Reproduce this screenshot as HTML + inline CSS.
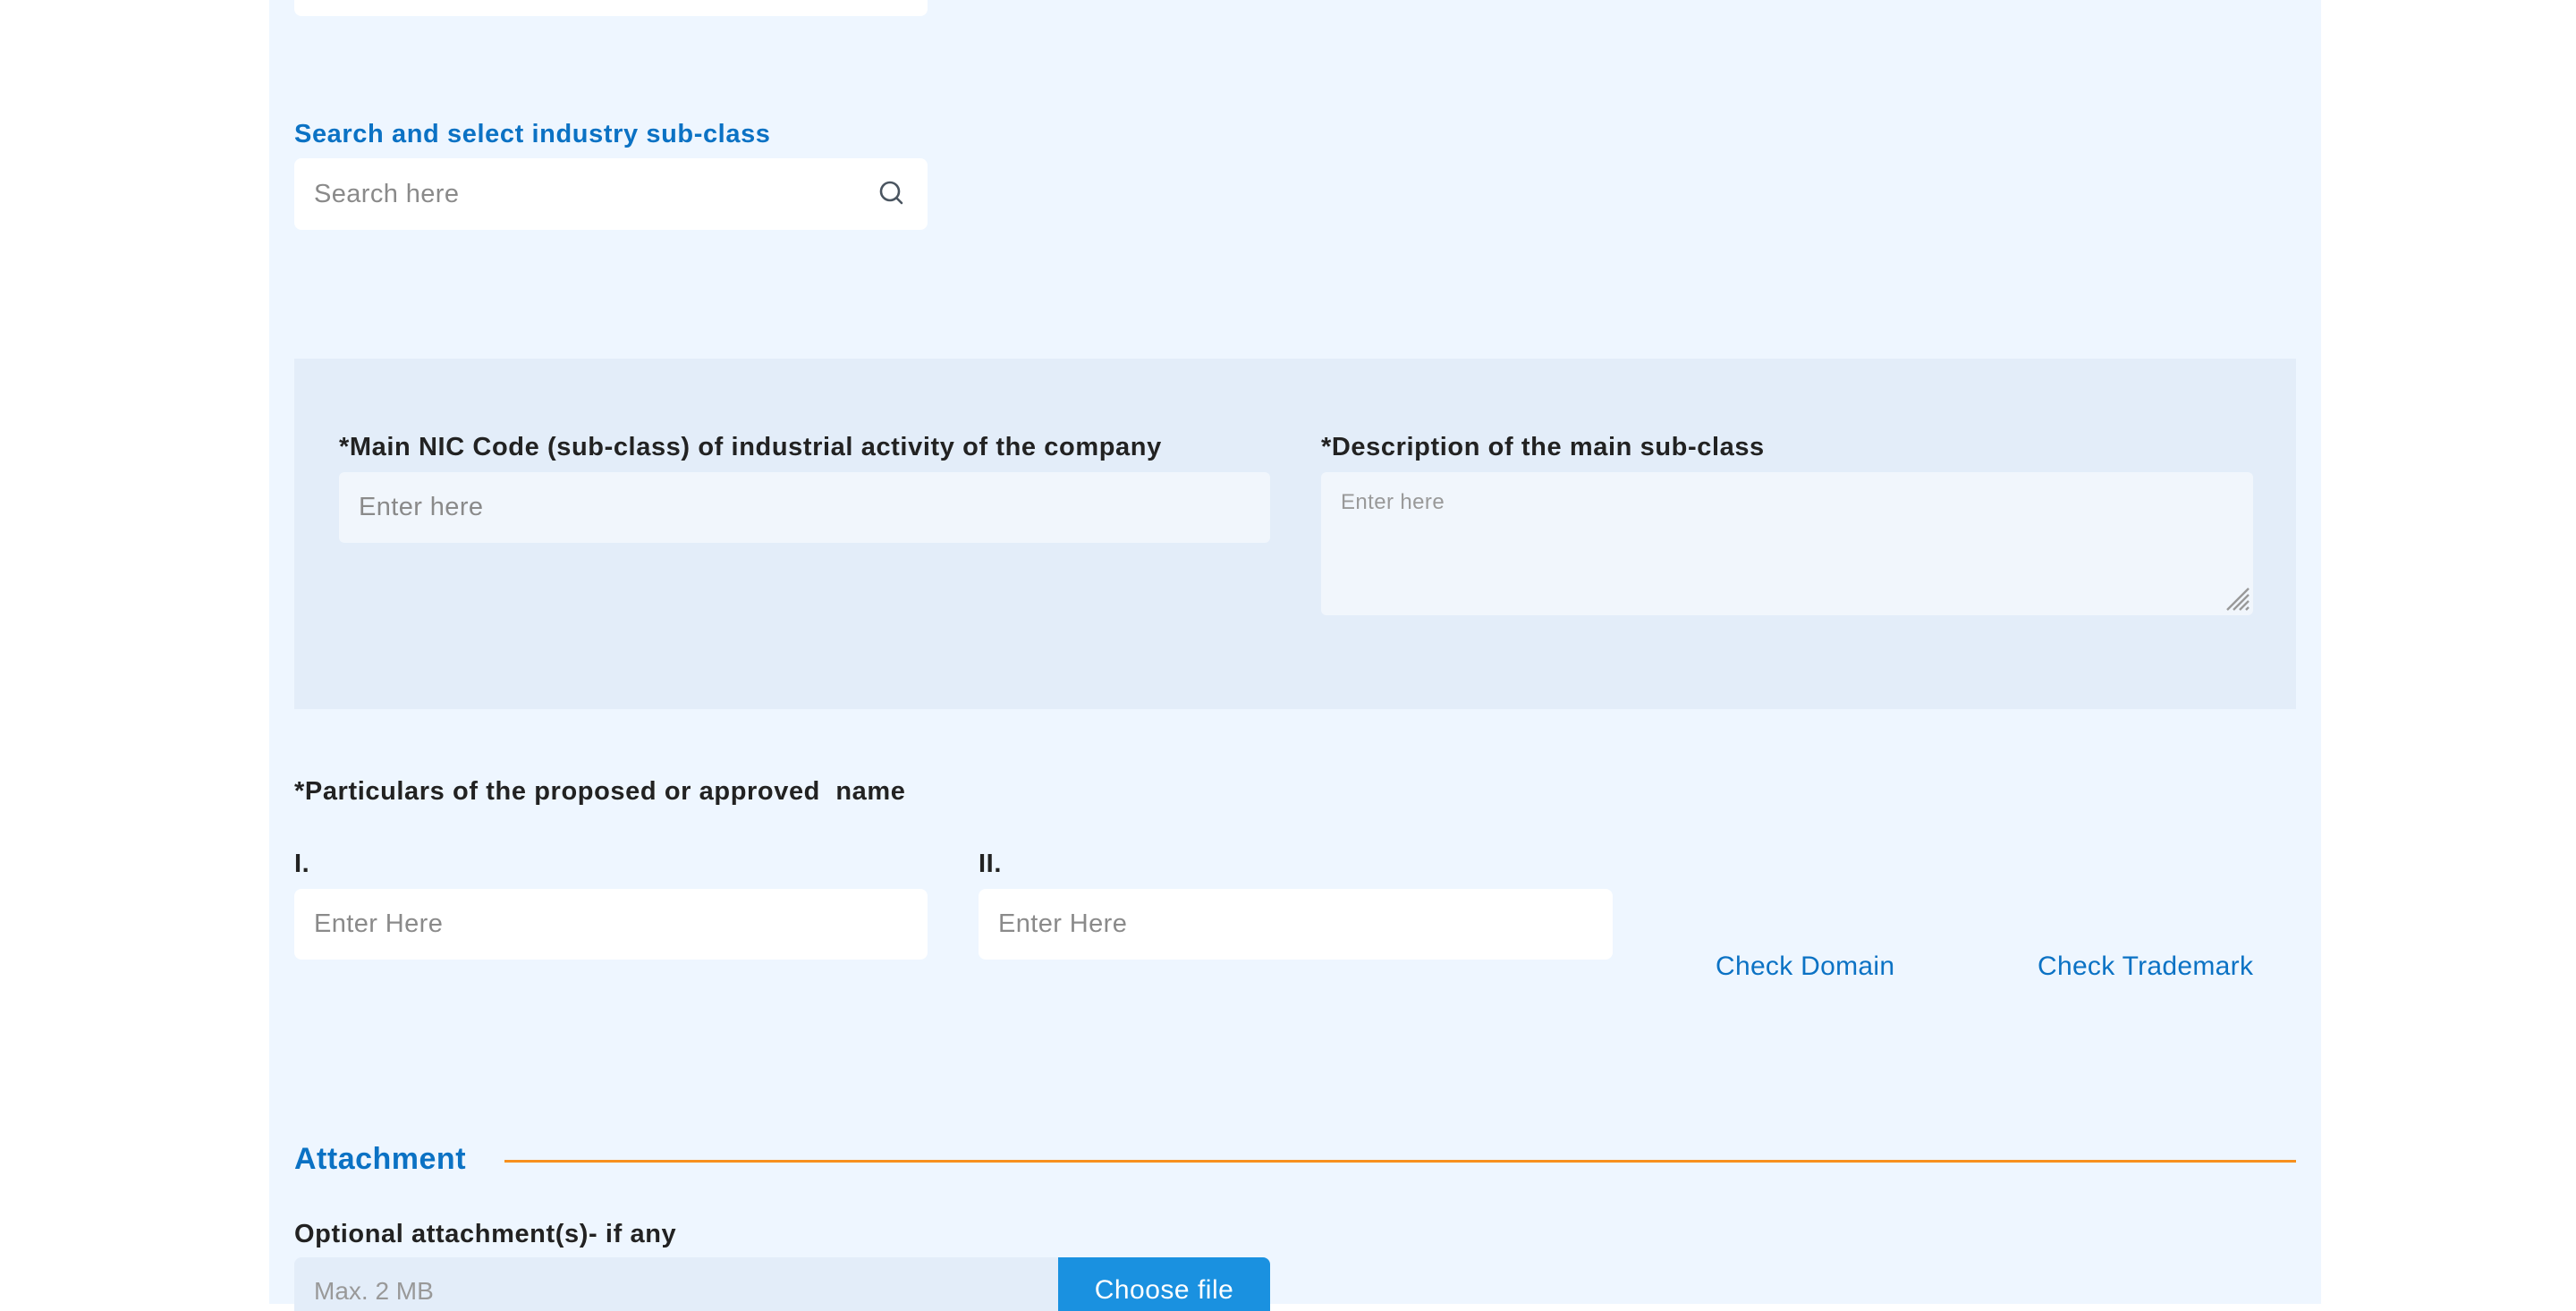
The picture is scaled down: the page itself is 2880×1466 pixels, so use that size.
<!DOCTYPE html>
<html><head><meta charset="utf-8"><style>
*{margin:0;padding:0;box-sizing:border-box}
body{width:2880px;height:1458px;background:#fff;position:relative;overflow:hidden;font-family:"Liberation Sans",sans-serif}
.a{position:absolute}
.panel{left:301px;top:0;width:2294px;height:1458px;background:#eef6ff}
.lbl{font-size:29px;color:#222;font-weight:bold;line-height:36px;white-space:nowrap;letter-spacing:0.6px}
.blue{color:#0b72c4}
.inp{background:#fff;border-radius:8px;font-size:29px;color:#8a8a8a;padding-left:22px;display:flex;align-items:center;letter-spacing:0.4px}
.lnk{font-weight:normal;font-size:30px;letter-spacing:0.3px}
</style></head><body>
<div class="a panel"></div>
<div class="a" style="left:329px;top:0;width:708px;height:18px;background:#fff;border-radius:0 0 8px 8px"></div>

<div class="a lbl blue" style="left:329px;top:132px">Search and select industry sub-class</div>
<div class="a inp" style="left:329px;top:177px;width:708px;height:80px">Search here</div>
<svg class="a" style="left:981px;top:200px" width="32" height="32" viewBox="0 0 32 32"><circle cx="14" cy="14" r="10" fill="none" stroke="#4a5560" stroke-width="2.6"/><line x1="21.5" y1="21.5" x2="27" y2="27" stroke="#4a5560" stroke-width="2.6" stroke-linecap="round"/></svg>

<div class="a" style="left:329px;top:401px;width:2238px;height:392px;background:#e3edf9"></div>
<div class="a lbl" style="left:379px;top:482px">*Main NIC Code (sub-class) of industrial activity of the company</div>
<div class="a inp" style="left:379px;top:528px;width:1041px;height:79px;background:#f1f6fc;border-radius:6px">Enter here</div>
<div class="a lbl" style="left:1477px;top:482px">*Description of the main sub-class</div>
<div class="a" style="left:1477px;top:528px;width:1042px;height:160px;background:#f1f6fc;border-radius:6px;font-size:24px;color:#999;padding:20px 22px;letter-spacing:0.4px">Enter here</div>
<svg class="a" style="left:2488px;top:656px" width="28" height="28" viewBox="0 0 28 28"><g stroke="#999" stroke-width="2.4"><line x1="2" y1="26" x2="26" y2="2"/><line x1="9" y1="26" x2="26" y2="9"/><line x1="16" y1="26" x2="26" y2="16"/><line x1="23" y1="26" x2="26" y2="23"/></g></svg>

<div class="a lbl" style="left:329px;top:867px">*Particulars of the proposed or approved&nbsp; name</div>
<div class="a lbl" style="left:329px;top:948px">I.</div>
<div class="a lbl" style="left:1094px;top:948px">II.</div>
<div class="a inp" style="left:329px;top:994px;width:708px;height:79px">Enter Here</div>
<div class="a inp" style="left:1094px;top:994px;width:709px;height:79px">Enter Here</div>
<div class="a lbl blue lnk" style="left:1918px;top:1063px">Check Domain</div>
<div class="a lbl blue lnk" style="left:2278px;top:1063px">Check Trademark</div>

<div class="a blue" style="left:329px;top:1276px;font-size:34px;line-height:40px;font-weight:bold;letter-spacing:0.5px">Attachment</div>
<div class="a" style="left:564px;top:1297px;width:2003px;height:3px;background:#f7901e"></div>
<div class="a lbl" style="left:329px;top:1362px">Optional attachment(s)- if any</div>
<div class="a" style="left:329px;top:1406px;width:854px;height:60px;background:#e3edf9;border-radius:8px 0 0 0;font-size:28px;color:#999;padding:22px 0 0 22px">Max. 2 MB</div>
<div class="a" style="left:1183px;top:1406px;width:237px;height:60px;background:#1a91e0;border-radius:0 8px 0 0;font-size:30px;color:#fff;text-align:center;padding-top:20px;letter-spacing:0.5px">Choose file</div>
</body></html>
